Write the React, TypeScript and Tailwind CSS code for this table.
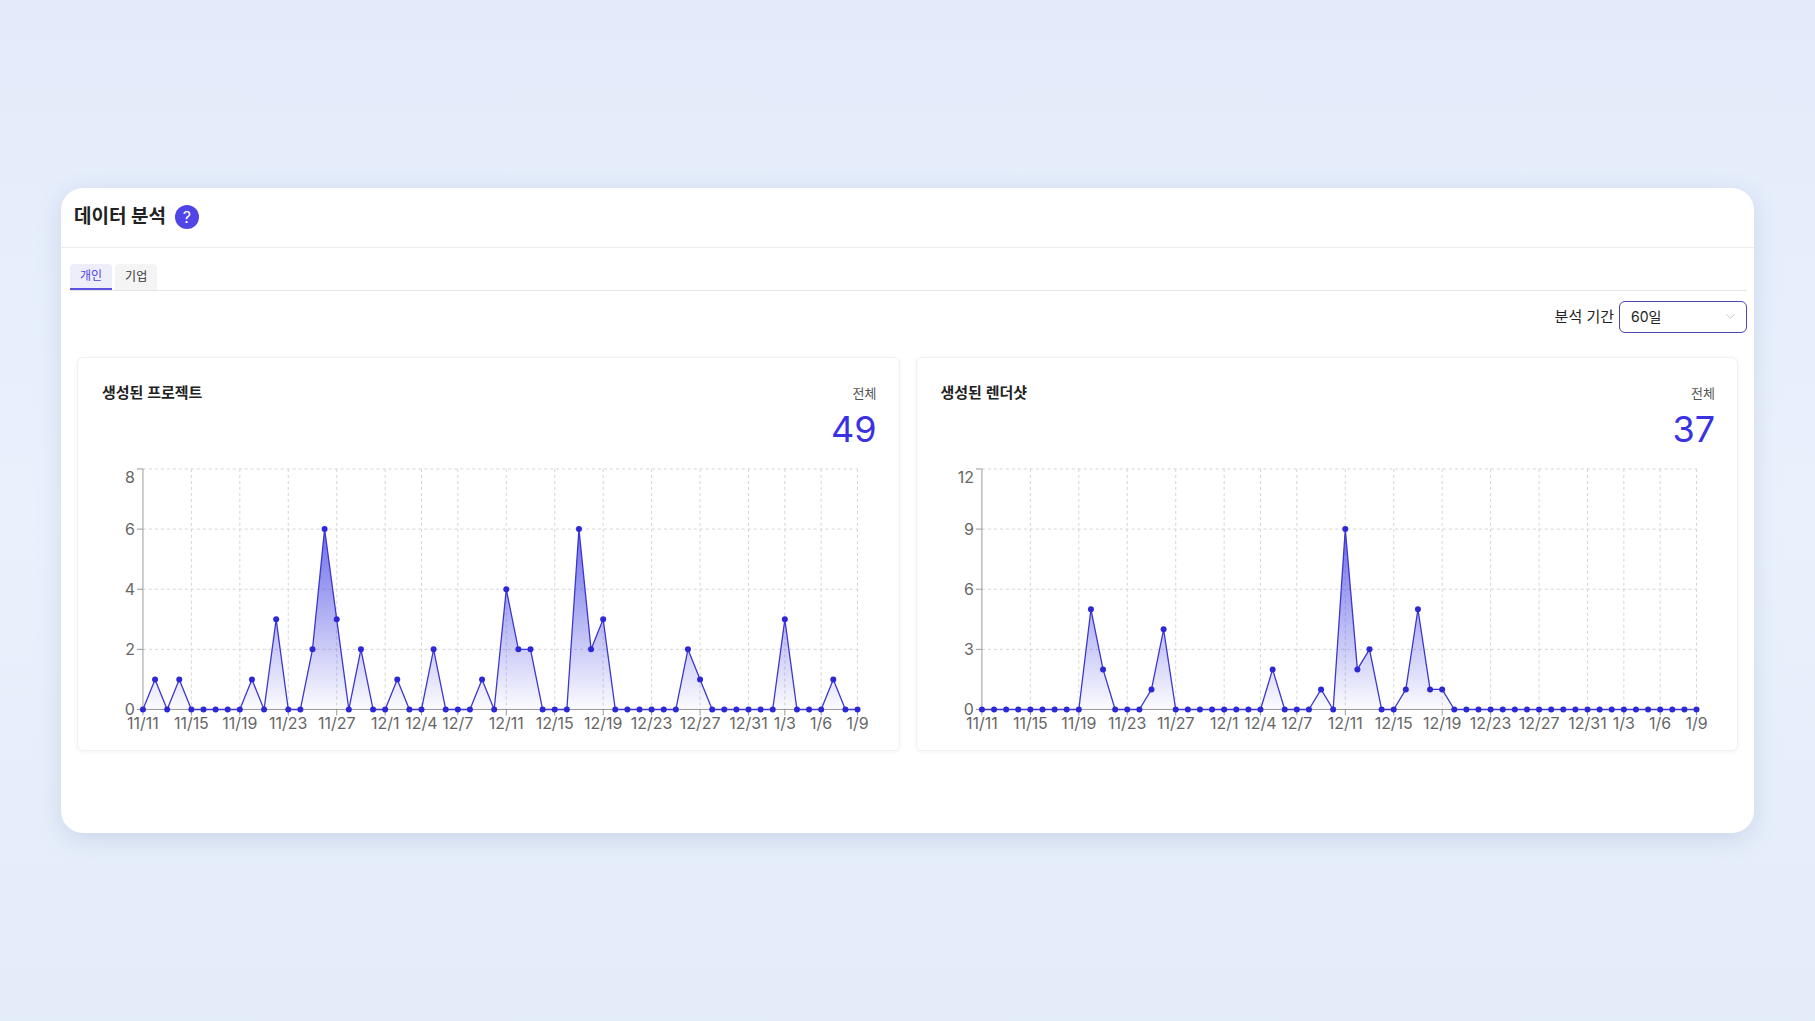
import React from "react";
import { ChevronDown } from "lucide-react";

const buildDates = () => {
  const out: string[] = [];
  for (let d = 11; d <= 30; d++) out.push(`11/${d}`);
  for (let d = 1; d <= 31; d++) out.push(`12/${d}`);
  for (let d = 1; d <= 9; d++) out.push(`1/${d}`);
  return out;
};
const DATES = buildDates();
const TICK_IDX = [0, 4, 8, 12, 16, 20, 23, 26, 30, 34, 38, 42, 46, 50, 53, 56, 59];

const DATA1 = [
  0, 1, 0, 1, 0, 0, 0, 0, 0, 1, 0, 3, 0, 0, 2, 6, 3, 0, 2, 0, 0, 1, 0, 0, 2, 0, 0, 0, 1, 0,
  4, 2, 2, 0, 0, 0, 6, 2, 3, 0, 0, 0, 0, 0, 0, 2, 1, 0, 0, 0, 0, 0, 0, 3, 0, 0, 0, 1, 0, 0,
];
const DATA2 = [
  0, 0, 0, 0, 0, 0, 0, 0, 0, 5, 2, 0, 0, 0, 1, 4, 0, 0, 0, 0, 0, 0, 0, 0, 2, 0, 0, 0, 1, 0,
  9, 2, 3, 0, 0, 1, 5, 1, 1, 0, 0, 0, 0, 0, 0, 0, 0, 0, 0, 0, 0, 0, 0, 0, 0, 0, 0, 0, 0, 0,
];

const FONT = "Inter, 'Noto Sans CJK KR', sans-serif";

function Chart({ data, yMax, yTicks, id }: { data: number[]; yMax: number; yTicks: number[]; id: string }) {
  const W = 774;
  const H = 284;
  const x0 = 41;
  const x1 = 757;
  const yTop = 20;
  const yBot = 261;
  const n = data.length;
  const xs = (i: number) => x0 + ((x1 - x0) * i) / (n - 1);
  const ys = (v: number) => yBot - ((yBot - yTop) * v) / yMax;
  const line = data.map((v, i) => `${i === 0 ? "M" : "L"}${xs(i).toFixed(2)},${ys(v).toFixed(2)}`).join(" ");
  const area = `${line} L${xs(n - 1).toFixed(2)},${yBot} L${xs(0).toFixed(2)},${yBot} Z`;
  return (
    <svg viewBox={`0 0 ${W} ${H}`} width={W} height={H} className="block w-full h-auto overflow-visible">
      <defs>
        <linearGradient id={id} x1="0" y1="0" x2="0" y2="1">
          <stop offset="0%" stopColor="#4f4fe6" stopOpacity={0.82} />
          <stop offset="100%" stopColor="#4f4fe6" stopOpacity={0.02} />
        </linearGradient>
      </defs>
      {yTicks.map((t) => (
        <line key={`h${t}`} x1={x0} x2={x1} y1={ys(t)} y2={ys(t)} stroke="#d4d4d4" strokeDasharray="3 3" strokeWidth={1} />
      ))}
      {TICK_IDX.filter((i) => i !== 0).map((i) => (
        <line key={`v${i}`} x1={xs(i)} x2={xs(i)} y1={yTop} y2={yBot} stroke="#d4d4d4" strokeDasharray="3 3" strokeWidth={1} />
      ))}
      <path d={area} fill={`url(#${id})`} stroke="none" />
      <line x1={x0} x2={x0} y1={yTop} y2={yBot} stroke="#9a9a9a" strokeWidth={1} />
      <line x1={x0} x2={x1} y1={yBot} y2={yBot} stroke="#9a9a9a" strokeWidth={1} />
      {yTicks.map((t) => (
        <line key={`yt${t}`} x1={x0 - 6} x2={x0} y1={ys(t)} y2={ys(t)} stroke="#9a9a9a" strokeWidth={1} />
      ))}
      {TICK_IDX.map((i) => (
        <line key={`xt${i}`} x1={xs(i)} x2={xs(i)} y1={yBot} y2={yBot + 6} stroke="#9a9a9a" strokeWidth={1} />
      ))}
      {yTicks.map((t) => (
        <text
          key={`yl${t}`}
          x={x0 - 8}
          y={(t === yMax ? ys(t) + 8 : ys(t)) + 5.7}
          textAnchor="end"
          fontSize={16}
          fill="#666666"
          fontFamily={FONT}
        >
          {t}
        </text>
      ))}
      {TICK_IDX.map((i) => (
        <text key={`xl${i}`} x={xs(i)} y={281} textAnchor="middle" fontSize={16} fill="#666666" fontFamily={FONT}>
          {DATES[i]}
        </text>
      ))}
      <path d={line} fill="none" stroke="#3d36cf" strokeWidth={1.3} strokeLinejoin="round" />
      {data.map((v, i) => (
        <circle key={`d${i}`} cx={xs(i)} cy={ys(v)} r={3} fill="#2c28d6" />
      ))}
    </svg>
  );
}

function ChartCard({
  title,
  total,
  data,
  yMax,
  yTicks,
  id,
}: {
  title: string;
  total: number;
  data: number[];
  yMax: number;
  yTicks: number[];
  id: string;
}) {
  return (
    <div className="bg-white rounded-md border border-[#f1f1f3] shadow-[0_1px_4px_rgba(0,0,0,0.05)] px-6 pt-6 pb-[18px]">
      <div className="flex items-center justify-between h-[22px] -mr-[2px]">
        <span className="text-[15px] font-semibold text-[#222] leading-[22px]">{title}</span>
        <span className="text-[13px] text-[#555] leading-[22px]">전체</span>
      </div>
      <div className="flex justify-end mt-[5px] -mr-[2px]">
        <span className="text-[36px] leading-[40px] text-[#3a31e3] font-normal">{total}</span>
      </div>
      <Chart data={data} yMax={yMax} yTicks={yTicks} id={id} />
    </div>
  );
}

export default function App() {
  return (
    <div
      className="min-h-screen w-full flex items-center justify-center px-[61px] bg-gradient-to-b from-[#e3ebfa] via-[#eaf1fd] to-[#e4ecf9]"
      style={{ fontFamily: FONT }}
    >
      <div className="w-full bg-white rounded-[22px] shadow-[0_6px_24px_rgba(90,110,160,0.18)] pb-[82px]">
        <div className="h-[60px] flex items-center px-[13px] border-b border-[#ececec]">
          <h1 className="text-[19px] font-bold text-[#222]">데이터 분석</h1>
          <span className="ml-[9px] w-6 h-6 rounded-full bg-[#4f46e5] text-white flex items-center justify-center text-[16px] font-normal leading-none">
            ?
          </span>
        </div>
        <div className="mt-[16px] ml-[9px] mr-[7px] border-b border-[#e6e6e6] flex gap-[3px]">
          <button className="h-[26px] px-[10px] text-[12px] text-[#4f46e5] bg-[#eeeefb] rounded-t-[4px] border-b-2 border-[#5a53e0]">
            개인
          </button>
          <button className="h-[26px] px-[10px] text-[12px] text-[#333] bg-[#f4f4f5] rounded-t-[4px]">기업</button>
        </div>
        <div className="mt-[10px] mr-[7px] flex items-center justify-end gap-[5px]">
          <span className="text-[15px] text-[#222]">분석 기간</span>
          <div className="w-[128px] h-[32px] rounded-[6px] border border-[#4b46b0] flex items-center justify-between pl-[11px] pr-[8px]">
            <span className="text-[14px] text-[#222]">60일</span>
            <ChevronDown size={15} strokeWidth={1.2} color="#b5b5b5" />
          </div>
        </div>
        <div className="mt-6 px-4 grid grid-cols-2 gap-4">
          <ChartCard title="생성된 프로젝트" total={49} data={DATA1} yMax={8} yTicks={[0, 2, 4, 6, 8]} id="g1" />
          <ChartCard title="생성된 렌더샷" total={37} data={DATA2} yMax={12} yTicks={[0, 3, 6, 9, 12]} id="g2" />
        </div>
      </div>
    </div>
  );
}
